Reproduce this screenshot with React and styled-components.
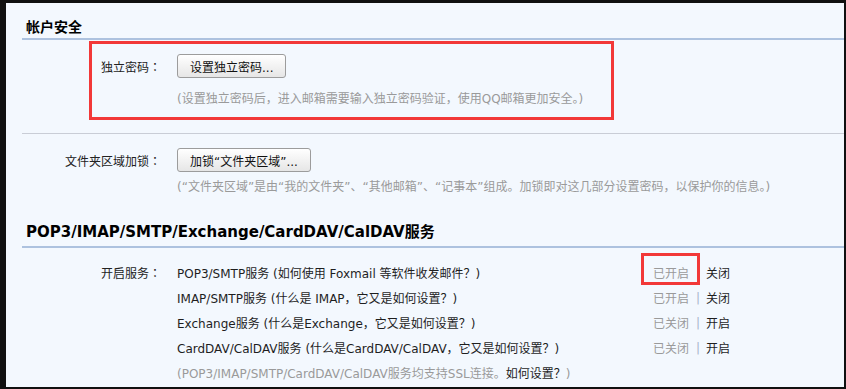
import React from 'react'
import styled, { createGlobalStyle } from 'styled-components'

const GlobalStyle = createGlobalStyle`
  html, body {
    margin: 0;
    padding: 0;
    background: #101010;
  }
  body {
    font-family: "DejaVu Sans", "Noto Sans CJK SC", sans-serif;
    font-size: 12px;
    color: #1e1e1e;
  }
`

const services = [
  { name: 'POP3/SMTP服务', help: '(如何使用 Foxmail 等软件收发邮件？)', on: true, marked: true },
  { name: 'IMAP/SMTP服务', help: '(什么是 IMAP，它又是如何设置？)', on: true },
  { name: 'Exchange服务', help: '(什么是Exchange，它又是如何设置？)', on: false },
  { name: 'CardDAV/CalDAV服务', help: '(什么是CardDAV/CalDAV，它又是如何设置？)', on: false },
]

const App = () => {
  return (
    <>
      <GlobalStyle />
      <Screen>
        <Panel>
          <SectionHead>帐户安全</SectionHead>
          <HeadRule />

          <FormBlock $top={14} $bottom={24}>
            <Highlight style={{ top: 1, left: 83, width: 525, height: 79 }} />
            <FieldRow>
              <Label>独立密码：</Label>
              <div>
                <Button>设置独立密码...</Button>
              </div>
            </FieldRow>
            <FieldRow>
              <span />
              <Hint $gap={11}>(设置独立密码后，进入邮箱需要输入独立密码验证，使用QQ邮箱更加安全。)</Hint>
            </FieldRow>
          </FormBlock>
          <Divider />

          <FormBlock $top={14} $bottom={22}>
            <FieldRow>
              <Label>文件夹区域加锁：</Label>
              <div>
                <Button>加锁“文件夹区域”...</Button>
              </div>
            </FieldRow>
            <FieldRow>
              <span />
              <Hint $gap={5}>(“文件夹区域”是由“我的文件夹”、“其他邮箱”、“记事本”组成。加锁即对这几部分设置密码，以保护你的信息。)</Hint>
            </FieldRow>
          </FormBlock>

          <ServiceHead>POP3/IMAP/SMTP/Exchange/CardDAV/CalDAV服务</ServiceHead>
          <HeadRule />

          <ServiceList>
            {services.map((s, i) => (
              <ServiceRow key={s.name}>
                <Label>{i === 0 ? '开启服务：' : ''}</Label>
                <ServiceText>
                  {s.name} {s.help}
                </ServiceText>
                <Status>
                  {s.marked && <Highlight style={{ top: -11, left: -12, width: 59, height: 32 }} />}
                  <State>{s.on ? '已开启' : '已关闭'}</State>
                  <Sep>|</Sep>
                  <Toggle>{s.on ? '关闭' : '开启'}</Toggle>
                </Status>
              </ServiceRow>
            ))}
            <ServiceRow>
              <span />
              <Note>
                (POP3/IMAP/SMTP/CardDAV/CalDAV服务均支持SSL连接。<Toggle>如何设置？</Toggle>)
              </Note>
            </ServiceRow>
          </ServiceList>
        </Panel>
      </Screen>
    </>
  )
}

const Screen = styled.div`
  width: 846px;
  height: 389px;
  padding: 3px 2px 2px 6px;
  box-sizing: border-box;
  background: #101010;
`

const Panel = styled.div`
  height: 100%;
  background: #f3f8fe;
  overflow: hidden;
`

const SectionHead = styled.h3`
  margin: 0;
  height: 35px;
  box-sizing: border-box;
  padding: 13px 0 0 20px;
  line-height: 20px;
  font-size: 14px;
  font-weight: bold;
  color: #000;
  font-family: "Noto Sans CJK SC", sans-serif;
`

const ServiceHead = styled(SectionHead)`
  height: 27px;
  padding-top: 2px;
  line-height: 22px;
  font-size: 15px;
  font-family: "DejaVu Sans", "Noto Sans CJK SC", sans-serif;
`

const HeadRule = styled.div`
  margin-left: 16px;
  height: 2px;
  background: #adc2df;
`

const Divider = styled.div`
  margin-left: 16px;
  height: 1px;
  background: #c9cdd6;
`

const FormBlock = styled.section`
  position: relative;
  padding: ${p => p.$top}px 0 ${p => p.$bottom}px;
`

const FieldRow = styled.div`
  display: grid;
  grid-template-columns: 155px 1fr;
  column-gap: 16px;
  align-items: center;
`

const Label = styled.div`
  text-align: right;
  color: #222;
  white-space: nowrap;
  font-family: "Noto Sans CJK JP", sans-serif;
`

const Button = styled.button`
  height: 24px;
  padding: 0 12px;
  border: 1px solid #9c9c9c;
  border-radius: 3px;
  background: linear-gradient(#ffffff, #e6e6e6);
  font: inherit;
  color: #111;
  cursor: pointer;
`

const Hint = styled.p`
  margin: ${p => p.$gap}px 0 0;
  line-height: 20px;
  color: #9a9a9a;
`

const ServiceList = styled.div`
  padding-top: 12px;
`

const ServiceRow = styled.div`
  display: grid;
  grid-template-columns: 155px 460px auto;
  column-gap: 16px;
  align-items: center;
  height: 25px;
`

const ServiceText = styled.div`
  color: #1e1e1e;
  white-space: nowrap;
`

const Note = styled.div`
  grid-column: 2 / 4;
  color: #9a9a9a;
  white-space: nowrap;
`

const Status = styled.div`
  position: relative;
  display: flex;
  align-items: center;
`

const State = styled.span`
  color: #9a9a9a;
`

const Sep = styled.span`
  margin: 0 6px 0 7px;
  color: #a9b6ca;
`

const Toggle = styled.a`
  color: #1e1e1e;
  cursor: pointer;
`

const Highlight = styled.div`
  position: absolute;
  box-sizing: border-box;
  border: 3px solid #f23838;
  pointer-events: none;
`

export default App
